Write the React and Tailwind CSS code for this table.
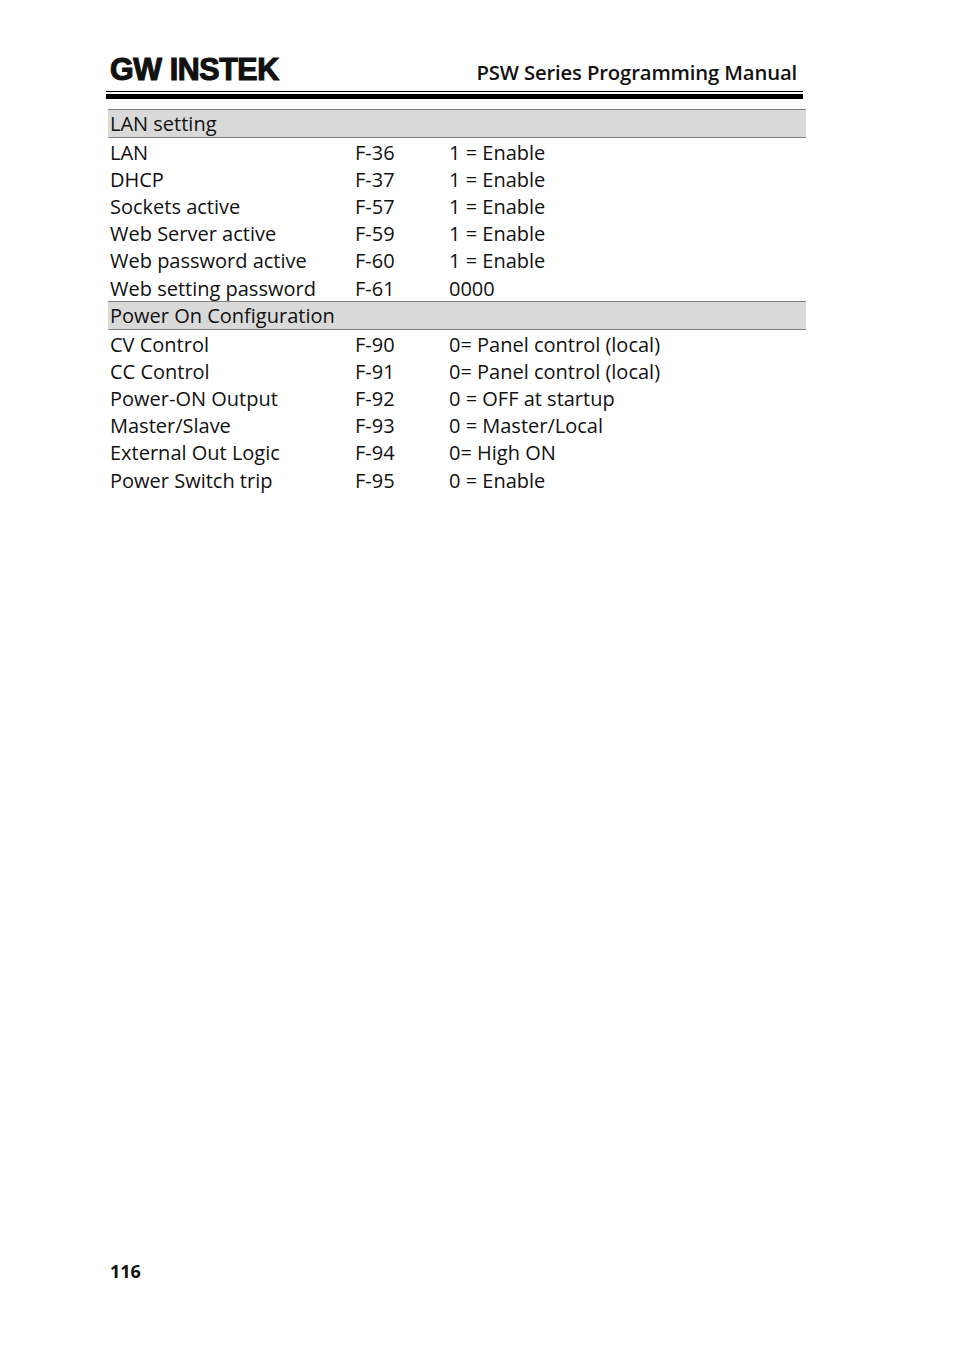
import React from 'react';

const lanRows = [
  ['LAN', 'F-36', '1 = Enable'],
  ['DHCP', 'F-37', '1 = Enable'],
  ['Sockets active', 'F-57', '1 = Enable'],
  ['Web Server active', 'F-59', '1 = Enable'],
  ['Web password active', 'F-60', '1 = Enable'],
  ['Web setting password', 'F-61', '0000'],
];

const powerRows = [
  ['CV Control', 'F-90', '0= Panel control (local)'],
  ['CC Control', 'F-91', '0= Panel control (local)'],
  ['Power-ON Output', 'F-92', '0 = OFF at startup'],
  ['Master/Slave', 'F-93', '0 = Master/Local'],
  ['External Out Logic', 'F-94', '0= High ON'],
  ['Power Switch trip', 'F-95', '0 = Enable'],
];

const Band = ({ title }) => (
  <div className="h-[29px] bg-[#d9d9d9] border-y border-[#808080] flex items-center pl-[2px]">
    <span className="text-[20px] leading-none">{title}</span>
  </div>
);

const Row = ({ row }) => (
  <div className="h-[27.2px] flex items-center pl-[2px] pt-[2px] text-[20px] leading-none">
    <span className="w-[245px]">{row[0]}</span>
    <span className="w-[94px]">{row[1]}</span>
    <span>{row[2]}</span>
  </div>
);

export default function App() {
  return (
    <div className="w-[954px] h-[1349px] bg-white text-[#111] relative" style={{ fontFamily: '"Open Sans", sans-serif' }}>
      <div className="pt-[55px] pl-[106px] w-[804px]">
        {/* header */}
        <div className="flex items-end justify-between pl-[4px] pr-[7px] h-[28px]">
          <span
            className="font-bold text-[32px] leading-none tracking-[-0.4px] scale-x-[0.95] origin-left translate-y-[2px] [-webkit-text-stroke:1.2px_#111]"
            style={{ fontFamily: '"Liberation Sans", Arial, sans-serif' }}
          >
            GW INSTEK
          </span>
          <span className="font-semibold text-[20.3px] leading-none mb-[1px] tracking-[-0.15px]">PSW Series Programming Manual</span>
        </div>
        <div className="mt-[8px] h-px bg-black w-[697px]" />
        <div className="mt-[2px] h-[5px] bg-black w-[697px]" />

        <div className="mt-[10px] ml-[2px] w-[698px]">
          <Band title="LAN setting" />
          {lanRows.map((r) => <Row key={r[0]} row={r} />)}
          <Band title="Power On Configuration" />
          {powerRows.map((r) => <Row key={r[0]} row={r} />)}
        </div>
      </div>

      <div className="absolute left-[110px] top-[1262px] font-bold text-[18px] leading-none">116</div>
    </div>
  );
}
